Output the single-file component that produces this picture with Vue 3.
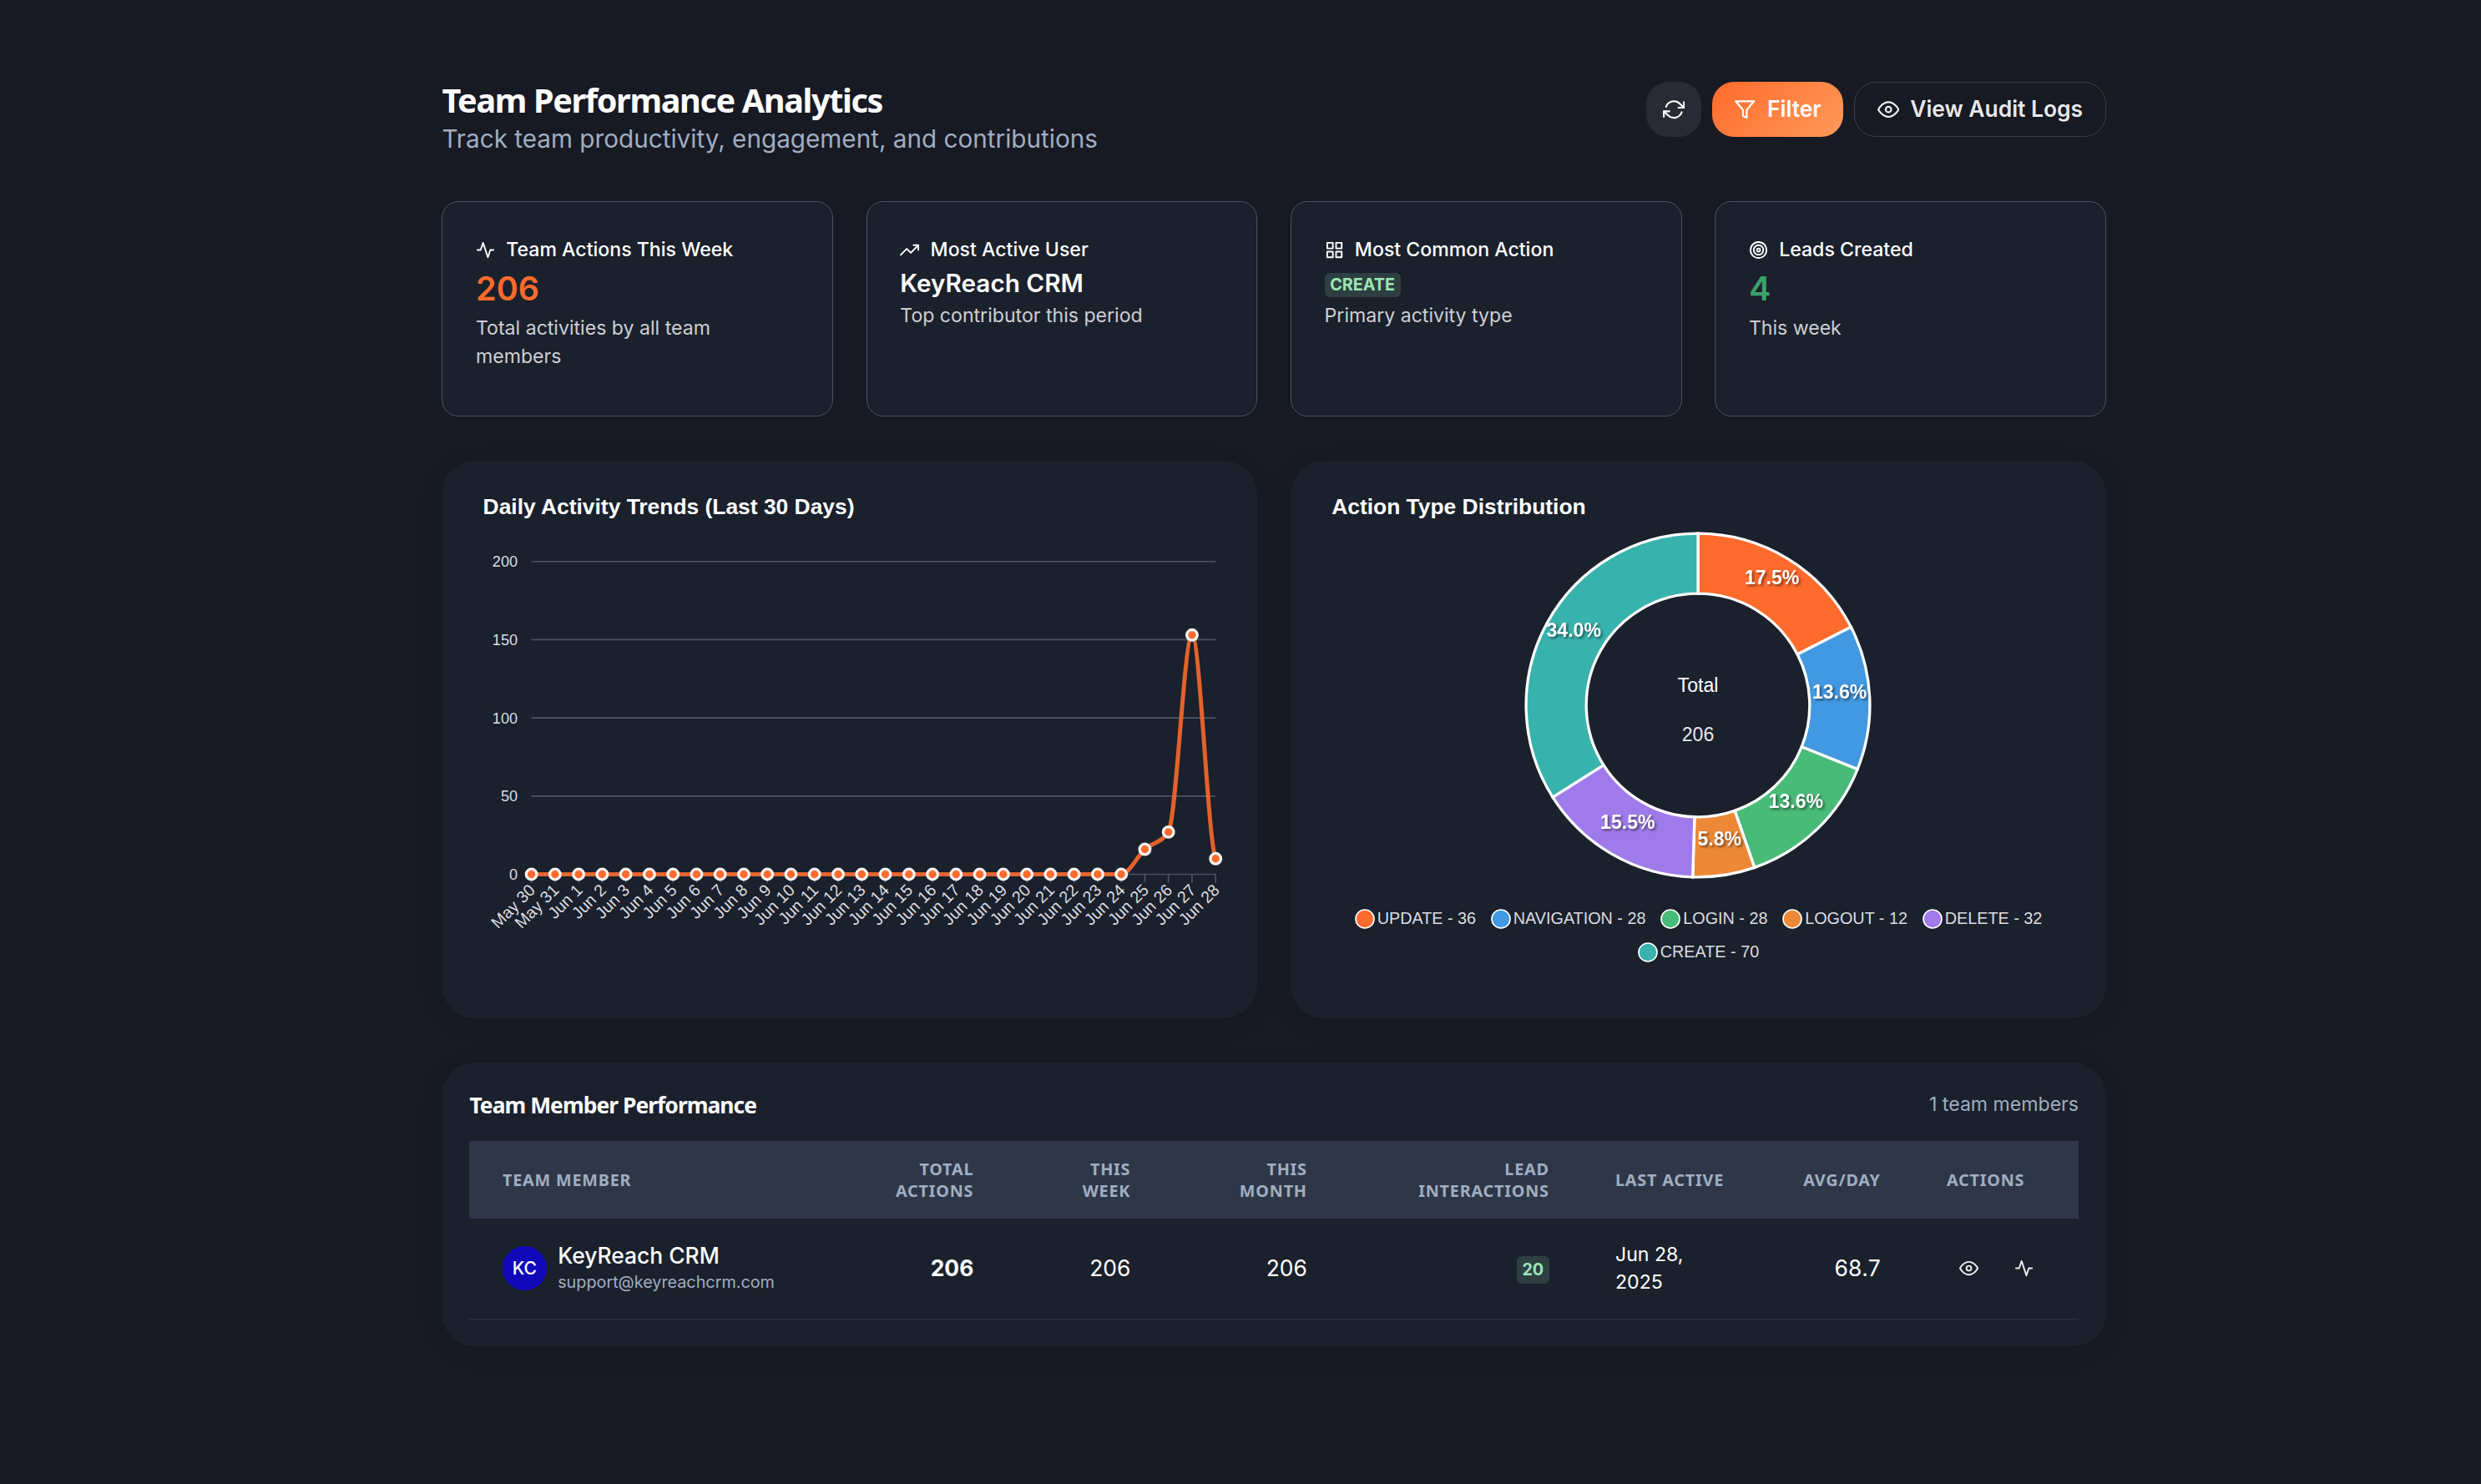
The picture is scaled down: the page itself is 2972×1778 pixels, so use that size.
<template>
  <main class="analytics-page">
    <!-- Page Header -->
    <header class="page-header">
      <div class="page-heading">
        <h1>Team Performance Analytics</h1>
        <p>Track team productivity, engagement, and contributions</p>
      </div>

      <div class="header-actions">
        <button class="btn btn-icon" aria-label="Refresh">
          <svg class="icon icon-md" viewBox="0 0 24 24">
            <path v-for="d in icons.refresh" :key="d" :d="d" />
          </svg>
        </button>
        <button class="btn btn-primary">
          <svg class="icon icon-md" viewBox="0 0 24 24">
            <path v-for="d in icons.filter" :key="d" :d="d" />
          </svg>
          <span>Filter</span>
        </button>
        <button class="btn btn-outline">
          <svg class="icon icon-md" viewBox="0 0 24 24">
            <path v-for="d in icons.eye" :key="d" :d="d" />
          </svg>
          <span>View Audit Logs</span>
        </button>
      </div>
    </header>

    <!-- Stat Cards -->
    <section class="stats-grid">
      <div v-for="stat in stats" :key="stat.label" class="stat-card">
        <div class="stat-label">
          <svg class="icon icon-sm" viewBox="0 0 24 24">
            <path v-for="d in icons[stat.icon]" :key="d" :d="d" />
          </svg>
          <span>{{ stat.label }}</span>
        </div>
        <div class="stat-value" :class="stat.variant">
          <span :class="{ badge: stat.variant === 'tag' }">{{ stat.value }}</span>
        </div>
        <p class="stat-help">{{ stat.help }}</p>
      </div>
    </section>

    <!-- Charts -->
    <section class="charts-grid">
      <div class="panel chart-panel">
        <h3>Daily Activity Trends (Last 30 Days)</h3>
        <svg class="line-chart" viewBox="0 0 977 520" width="977" height="520">
          <g v-for="tick in yTicks" :key="tick">
            <line class="grid-line" :x1="plot.left" :x2="plot.right" :y1="yPos(tick)" :y2="yPos(tick)" />
            <text class="y-label" :x="plot.left - 16.5" :y="yPos(tick) + 6.4">{{ tick }}</text>
          </g>
          <g v-for="(point, i) in points" :key="point.label">
            <line class="grid-line" :x1="point.x" :x2="point.x" :y1="plot.bottom" :y2="plot.bottom + 10" />
            <text
              class="x-label"
              :transform="`translate(${point.x + 5.8} ${plot.bottom + 20.2}) rotate(-45)`"
            >{{ days[i].label }}</text>
          </g>
          <path class="trend-line" :d="trendPath" />
          <circle v-for="point in points" :key="point.label" class="marker" :cx="point.x" :cy="point.y" r="6.3" />
        </svg>
      </div>

      <div class="panel chart-panel">
        <h3>Action Type Distribution</h3>
        <svg class="donut-chart" viewBox="-220 -220 440 440" width="440" height="440">
          <path v-for="slice in slices" :key="slice.name" class="slice" :d="slice.path" :fill="slice.color" />
          <text
            v-for="slice in slices"
            :key="slice.name"
            class="slice-label"
            :x="slice.labelX"
            :y="slice.labelY"
          >{{ slice.percent }}%</text>
          <text class="total-label" y="-16">Total</text>
          <text class="total-label total-value" y="42.8">{{ total }}</text>
        </svg>
        <ul class="legend">
          <li v-for="action in actions" :key="action.name">
            <svg viewBox="0 0 24 24" width="24" height="24">
              <circle cx="12" cy="12" r="11" :fill="action.color" />
            </svg>
            <span>{{ action.name }} - {{ action.count }}</span>
          </li>
        </ul>
      </div>
    </section>

    <!-- Team Member Table -->
    <section class="panel table-panel">
      <div class="table-title">
        <h2>Team Member Performance</h2>
        <span>{{ members.length }} team members</span>
      </div>

      <table>
        <colgroup>
          <col class="col-member" />
          <col class="col-total" />
          <col class="col-week" />
          <col class="col-month" />
          <col class="col-leads" />
          <col class="col-last" />
          <col class="col-avg" />
          <col class="col-actions" />
        </colgroup>
        <thead>
          <tr>
            <th>Team Member</th>
            <th class="numeric">Total Actions</th>
            <th class="numeric">This Week</th>
            <th class="numeric">This Month</th>
            <th class="numeric">Lead Interactions</th>
            <th class="nowrap">Last Active</th>
            <th class="numeric">Avg/Day</th>
            <th>Actions</th>
          </tr>
        </thead>
        <tbody>
          <tr v-for="member in members" :key="member.email">
            <td>
              <div class="member">
                <div class="avatar">{{ member.initials }}</div>
                <div class="member-info">
                  <div class="member-name">{{ member.name }}</div>
                  <div class="member-email">{{ member.email }}</div>
                </div>
              </div>
            </td>
            <td class="numeric strong">{{ member.total }}</td>
            <td class="numeric">{{ member.week }}</td>
            <td class="numeric">{{ member.month }}</td>
            <td class="numeric"><span class="badge badge-count">{{ member.leads }}</span></td>
            <td class="last-active">{{ member.lastActive }}</td>
            <td class="numeric average">{{ member.average }}</td>
            <td>
              <div class="row-actions">
                <button aria-label="View details">
                  <svg class="icon icon-sm" viewBox="0 0 24 24">
                    <path v-for="d in icons.eye" :key="d" :d="d" />
                  </svg>
                </button>
                <button aria-label="View activity">
                  <svg class="icon icon-sm" viewBox="0 0 24 24">
                    <path v-for="d in icons.activity" :key="d" :d="d" />
                  </svg>
                </button>
              </div>
            </td>
          </tr>
        </tbody>
      </table>
    </section>
  </main>
</template>

<script setup>
import { computed, ref } from 'vue'

// Stroke icons on a 24x24 grid
const icons = {
  refresh: [
    'M23 4v6h-6',
    'M1 20v-6h6',
    'M3.51 9a9 9 0 0 1 14.85-3.36L23 10M1 14l4.64 4.36A9 9 0 0 0 20.49 15'
  ],
  filter: ['M22 3H2l8 9.46V19l4 2v-8.54L22 3z'],
  eye: ['M1 12s4-8 11-8 11 8 11 8-4 8-11 8-11-8-11-8z', 'M12 9a3 3 0 1 0 0 6 3 3 0 0 0 0-6z'],
  activity: ['M22 12h-4l-3 9L9 3l-3 9H2'],
  trending: ['M23 6l-9.5 9.5-5-5L1 18', 'M17 6h6v6'],
  grid: ['M3 3h7v7H3z', 'M14 3h7v7h-7z', 'M14 14h7v7h-7z', 'M3 14h7v7H3z'],
  target: [
    'M12 2a10 10 0 1 0 0 20 10 10 0 0 0 0-20z',
    'M12 6a6 6 0 1 0 0 12 6 6 0 0 0 0-12z',
    'M12 10a2 2 0 1 0 0 4 2 2 0 0 0 0-4z'
  ]
}

const stats = [
  {
    label: 'Team Actions This Week',
    icon: 'activity',
    value: '206',
    variant: 'orange',
    help: 'Total activities by all team members'
  },
  {
    label: 'Most Active User',
    icon: 'trending',
    value: 'KeyReach CRM',
    variant: 'name',
    help: 'Top contributor this period'
  },
  {
    label: 'Most Common Action',
    icon: 'grid',
    value: 'CREATE',
    variant: 'tag',
    help: 'Primary activity type'
  },
  {
    label: 'Leads Created',
    icon: 'target',
    value: '4',
    variant: 'green',
    help: 'This week'
  }
]

const actions = [
  { name: 'UPDATE', count: 36, color: '#ff6b2c' },
  { name: 'NAVIGATION', count: 28, color: '#4299e1' },
  { name: 'LOGIN', count: 28, color: '#48bb78' },
  { name: 'LOGOUT', count: 12, color: '#ed8936' },
  { name: 'DELETE', count: 32, color: '#9f7aea' },
  { name: 'CREATE', count: 70, color: '#38b2ac' }
]

const members = ref([
  {
    name: 'KeyReach CRM',
    email: 'support@keyreachcrm.com',
    initials: 'KC',
    total: 206,
    week: 206,
    month: 206,
    leads: 20,
    lastActive: 'Jun 28, 2025',
    average: 68.7
  }
])

// Daily series, May 30 to Jun 28
const activity = { 'Jun 25': 16, 'Jun 26': 27, 'Jun 27': 153, 'Jun 28': 10 }
const days = ['May 30', 'May 31', ...Array.from({ length: 28 }, (_, i) => `Jun ${i + 1}`)].map(
  (label) => ({ label, value: activity[label] || 0 })
)

const plot = { left: 107.6, right: 927.2, top: 40.7, bottom: 415.5 }
const yTicks = [200, 150, 100, 50, 0]

function yPos(value) {
  return plot.bottom - (value / 200) * (plot.bottom - plot.top)
}

const points = days.map((day, i) => ({
  label: day.label,
  x: plot.left + (i * (plot.right - plot.left)) / (days.length - 1),
  y: yPos(day.value)
}))

// Monotone cubic through all the points
const trendPath = computed(() => {
  const step = points[1].x - points[0].x
  const slopes = points.slice(1).map((p, i) => (p.y - points[i].y) / step)
  const tangents = points.map((_, i) => {
    if (i === 0) return slopes[0]
    if (i === points.length - 1) return slopes[i - 1]
    const a = slopes[i - 1]
    const b = slopes[i]
    if (a * b <= 0) return 0
    return Math.sign(a) * Math.min(Math.abs(a) * 2, Math.abs(b) * 2, Math.abs(a + b) / 2)
  })
  // ease into the last point
  tangents[tangents.length - 1] = slopes[slopes.length - 1] * 0.25

  let d = `M${points[0].x} ${points[0].y}`
  for (let i = 1; i < points.length; i++) {
    const from = points[i - 1]
    const to = points[i]
    d += `C${from.x + step / 3} ${from.y + (tangents[i - 1] * step) / 3}`
    d += ` ${to.x - step / 3} ${to.y - (tangents[i] * step) / 3} ${to.x} ${to.y}`
  }
  return d
})

const total = actions.reduce((sum, action) => sum + action.count, 0)

const slices = computed(() => {
  const outer = 205.9
  const inner = 133.8
  const middle = (outer + inner) / 2
  const at = (radius, angle) => [radius * Math.sin(angle), -radius * Math.cos(angle)]
  let start = 0

  return actions.map((action) => {
    const end = start + (action.count / total) * Math.PI * 2
    const large = end - start > Math.PI ? 1 : 0
    const path =
      `M${at(outer, start)}A${outer} ${outer} 0 ${large} 1 ${at(outer, end)}` +
      `L${at(inner, end)}A${inner} ${inner} 0 ${large} 0 ${at(inner, start)}Z`
    const [labelX, labelY] = at(middle, (start + end) / 2)
    start = end
    return {
      ...action,
      path,
      labelX,
      labelY,
      percent: ((action.count / total) * 100).toFixed(1)
    }
  })
})
</script>

<style>
body {
  margin: 0;
  background: #171923;
}
</style>

<style scoped>
.analytics-page {
  box-sizing: border-box;
  width: 2972px;
  min-height: 1778px;
  padding: 98px 449px 0 529.4px;
  background: #171923;
  color: #ffffff;
  font-family: Inter, "Liberation Sans", sans-serif;
  font-size: 26.4px;
  line-height: 1.5;
}

h1,
h2,
h3,
p,
ul {
  margin: 0;
  padding: 0;
}

button {
  font: inherit;
  color: inherit;
  border: none;
  background: none;
  padding: 0;
}

.icon {
  display: block;
  flex-shrink: 0;
  fill: none;
  stroke: currentColor;
  stroke-width: 2;
  stroke-linecap: round;
  stroke-linejoin: round;
}

.icon-md {
  width: 26.4px;
  height: 26.4px;
}

.icon-sm {
  width: 23.1px;
  height: 23.1px;
}

/* Page Header */
.page-header {
  display: flex;
  justify-content: space-between;
  align-items: flex-start;
  height: 143px;
}

.page-heading h1 {
  font-family: "Noto Sans", sans-serif;
  font-size: 39.6px;
  font-weight: 700;
  line-height: 44px;
  letter-spacing: -1.35px;
}

.page-heading p {
  font-size: 29.7px;
  line-height: 44.6px;
  margin-top: 2px;
  color: #a0aec0;
}

.header-actions {
  display: flex;
  gap: 13.2px;
}

.btn {
  box-sizing: border-box;
  display: flex;
  align-items: center;
  justify-content: center;
  gap: 13.2px;
  height: 66px;
  padding: 0 26.4px;
  border-radius: 26.4px;
  font-weight: 600;
  white-space: nowrap;
}

.btn-icon {
  width: 66px;
  padding: 0;
  background: rgba(255, 255, 255, 0.08);
}

.btn-primary {
  padding: 0 26px;
  background: linear-gradient(135deg, #ff6b2c 0%, #ff9a5a 100%);
}

.btn-outline {
  padding: 0 27px 0 26.6px;
  border: 1px solid rgba(255, 255, 255, 0.16);
  color: rgba(255, 255, 255, 0.92);
}

/* Stat Cards */
.stats-grid {
  display: grid;
  grid-template-columns: repeat(4, 1fr);
  gap: 39.6px;
  margin-bottom: 53px;
}

.stat-card {
  box-sizing: border-box;
  height: 258px;
  padding: 39.9px 39.6px;
  background: #1a202c;
  border: 1px solid #4a5568;
  border-radius: 20px;
}

.stat-label {
  display: flex;
  align-items: center;
  gap: 13.2px;
  height: 34.65px;
  font-size: 23.1px;
  font-weight: 500;
}

.stat-value {
  font-size: 39.6px;
  font-weight: 600;
  line-height: 59px;
}

.stat-value.orange {
  color: #ff6b2c;
}

.stat-value.green {
  color: #38a169;
}

.stat-value.name {
  font-size: 29.7px;
  line-height: 44.5px;
}

.stat-value.tag {
  box-sizing: border-box;
  display: flex;
  height: 44.5px;
  padding-top: 10.2px;
}

.stat-help {
  font-size: 23.1px;
  line-height: 34.8px;
  color: rgba(255, 255, 255, 0.8);
}

.badge {
  display: inline-block;
  height: 29.7px;
  padding: 0 6.6px;
  border-radius: 6px;
  background: rgba(154, 230, 180, 0.16);
  color: #9ae6b4;
  font-size: 19.8px;
  font-weight: 700;
  line-height: 29.7px;
}

/* Charts */
.panel {
  background: #1a202c;
  border-radius: 40px;
  box-shadow: 0 6px 33px rgba(0, 0, 0, 0.06);
}

.charts-grid {
  display: grid;
  grid-template-columns: repeat(2, 1fr);
  gap: 39.6px;
  margin-bottom: 53px;
}

.chart-panel {
  height: 668px;
  font-family: "Liberation Sans", Arial, sans-serif;
}

.chart-panel h3 {
  height: 80px;
  padding: 38px 0 0 49.2px;
  box-sizing: border-box;
  font-size: 26.4px;
  font-weight: 700;
  line-height: 34px;
}

.line-chart {
  display: block;
}

.grid-line {
  stroke: #4a5568;
  stroke-width: 1.65;
}

.y-label,
.x-label {
  fill: #dcdde0;
  text-anchor: end;
}

.y-label {
  font-size: 18.15px;
}

.x-label {
  font-size: 19.8px;
}

.trend-line {
  fill: none;
  stroke: #ff6b2c;
  stroke-width: 5;
  stroke-opacity: 0.88;
}

.marker {
  fill: #ff6b2c;
  stroke: #f5f3f3;
  stroke-width: 3.3;
}

.donut-chart {
  display: block;
  margin: -7.5px auto 0;
}

.slice {
  stroke: #ffffff;
  stroke-width: 3.3;
}

.slice-label {
  fill: #ffffff;
  font-size: 23.1px;
  font-weight: 700;
  text-anchor: middle;
  filter: drop-shadow(2px 2px 1.5px rgba(0, 0, 0, 0.5));
}

.total-label {
  fill: #ffffff;
  font-size: 23.1px;
  text-anchor: middle;
}

.total-value {
  fill: #e6e7e9;
}

.legend {
  display: flex;
  flex-wrap: wrap;
  justify-content: center;
  gap: 0 17.8px;
  width: 900px;
  margin: 17px auto 0;
  list-style: none;
}

.legend li {
  display: flex;
  align-items: center;
  gap: 3px;
  height: 39.4px;
  font-size: 19.8px;
  color: #dcdde0;
}

.legend svg circle {
  stroke: #ffffff;
  stroke-width: 1.65;
}

/* Team Member Table */
.table-panel {
  box-sizing: border-box;
  height: 340px;
  padding: 33px;
}

.table-title {
  display: flex;
  justify-content: space-between;
  align-items: flex-start;
  height: 61px;
}

.table-title h2 {
  font-family: "Noto Sans", sans-serif;
  font-size: 26.4px;
  font-weight: 700;
  line-height: 36px;
  letter-spacing: -0.95px;
}

.table-title span {
  font-size: 23.1px;
  line-height: 34px;
  color: #a0aec0;
}

table {
  width: 1928px;
  table-layout: fixed;
  border-collapse: collapse;
}

.col-member {
  width: 471px;
}

.col-total {
  width: 172.5px;
}

.col-week {
  width: 188px;
}

.col-month {
  width: 211.5px;
}

.col-leads {
  width: 290px;
}

.col-last {
  width: 208px;
}

.col-avg {
  width: 189px;
}

.col-actions {
  width: 198px;
}

th,
td {
  padding: 0 39.6px;
  text-align: left;
}

th {
  height: 92px;
  padding-top: 1px;
  background: #2d3748;
  color: #a0aec0;
  font-family: "Noto Sans", sans-serif;
  font-size: 19.8px;
  font-weight: 700;
  line-height: 26.4px;
  letter-spacing: 0.8px;
  text-transform: uppercase;
}

td {
  height: 119px;
  border-bottom: 1px solid #2d3748;
}

.numeric {
  text-align: right;
}

.nowrap {
  white-space: nowrap;
}

.strong {
  font-weight: 700;
}

.average {
  font-kerning: none;
}

.member {
  display: flex;
  align-items: center;
  gap: 13.2px;
}

.avatar {
  display: flex;
  align-items: center;
  justify-content: center;
  flex-shrink: 0;
  width: 53px;
  height: 53px;
  border-radius: 50%;
  background: #1108ba;
  font-size: 21.1px;
  font-weight: 500;
}

.member-info {
  padding-bottom: 3px;
}

.member-name {
  font-weight: 500;
  line-height: 36px;
}

.member-email {
  font-size: 19.8px;
  line-height: 29.7px;
  color: #a0aec0;
}

.badge-count {
  height: 33px;
  line-height: 32px;
  vertical-align: middle;
}

.last-active {
  padding-bottom: 1px;
  font-size: 23.1px;
  line-height: 33px;
}

.row-actions {
  display: flex;
  gap: 13.2px;
}

.row-actions button {
  display: flex;
  align-items: center;
  justify-content: center;
  width: 52.8px;
  height: 52.8px;
  color: rgba(255, 255, 255, 0.92);
}
</style>
